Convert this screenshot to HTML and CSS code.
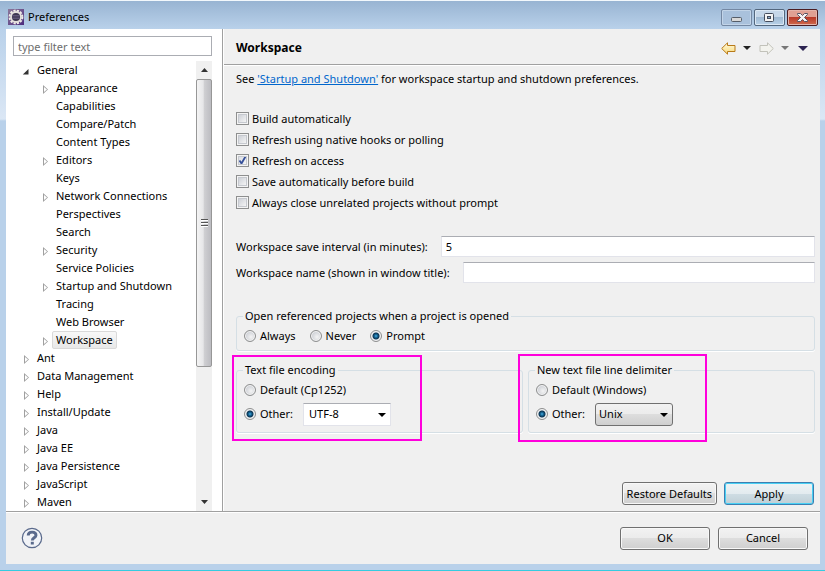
FILE: index.html
```html
<!DOCTYPE html>
<html lang="en">
<head>
<meta charset="utf-8">
<title>Preferences</title>
<link rel="stylesheet" href="styles.css">
</head>
<body>
<div class="window">
  <header class="titlebar">
    <svg class="app-icon" width="16" height="16" viewBox="0 0 16 16" aria-hidden="true">
      <defs><linearGradient id="plum" x2="1" y2="1"><stop stop-color="#8d7a9c"/><stop offset="1" stop-color="#4b2a7c"/></linearGradient></defs>
      <rect width="16" height="16" fill="url(#plum)"/>
      <circle cx="8" cy="8" r="6.400" fill="none" stroke="#f0eee8" stroke-width="2" stroke-dasharray="2.200 1.150"/>
      <circle cx="8" cy="8" r="5" fill="#3d3650" stroke="#e4e0dc" stroke-width="1.800"/>
      <path d="M4.200 6.800h7.600M4.200 9.200h7.600" stroke="#6f6689"/>
    </svg>
    <h1 class="title">Preferences</h1>
    <div class="window-controls">
      <button class="wbtn wbtn-min" type="button" aria-label="Minimize"><svg width="13" height="11" viewBox="0 0 13 11"><rect x="1.500" y="5.500" width="10" height="4" rx="1" fill="#d8d8d8" stroke="#555d68"/></svg></button>
      <button class="wbtn" type="button" aria-label="Maximize"><svg width="13" height="11" viewBox="0 0 13 11"><rect x="1.500" y="1.500" width="9" height="8" rx="1" fill="#f4f4f4" stroke="#454d5c"/><rect x="4.500" y="4.500" width="3" height="2" fill="#8ca9c8" stroke="#454d5c"/></svg></button>
      <button class="wbtn wbtn-close" type="button" aria-label="Close"><svg width="13" height="11" viewBox="0 0 13 11"><path d="M1.500 1.500h3l2 2 2-2h3v1l-3 3 3 3v1h-3l-2-2-2 2h-3v-1l3-3-3-3z" fill="#f6f4f4" stroke="#565464"/></svg></button>
    </div>
  </header>

  <div class="client">
    <div class="main">
      <nav class="sidebar" aria-label="Preference pages">
        <input class="filter" type="text" placeholder="type filter text" aria-label="type filter text">
        <div class="tree-area">
          <ul class="tree">
            <li class="node"><svg class="arrow" width="7" height="9" viewBox="0 0 7 9"><path d="M6.500 2v5.500H.8z" fill="#333"/></svg><span class="label">General</span>
              <ul class="branch">
                <li class="node parent"><span class="label">Appearance</span></li>
                <li class="node"><span class="label">Capabilities</span></li>
                <li class="node"><span class="label">Compare/Patch</span></li>
                <li class="node"><span class="label">Content Types</span></li>
                <li class="node parent"><span class="label">Editors</span></li>
                <li class="node"><span class="label">Keys</span></li>
                <li class="node parent"><span class="label">Network Connections</span></li>
                <li class="node"><span class="label">Perspectives</span></li>
                <li class="node"><span class="label">Search</span></li>
                <li class="node parent"><span class="label">Security</span></li>
                <li class="node"><span class="label">Service Policies</span></li>
                <li class="node parent"><span class="label">Startup and Shutdown</span></li>
                <li class="node"><span class="label">Tracing</span></li>
                <li class="node"><span class="label">Web Browser</span></li>
                <li class="node parent"><span class="label selected">Workspace</span></li>
              </ul>
            </li>
            <li class="node parent"><span class="label">Ant</span></li>
            <li class="node parent"><span class="label">Data Management</span></li>
            <li class="node parent"><span class="label">Help</span></li>
            <li class="node parent"><span class="label">Install/Update</span></li>
            <li class="node parent"><span class="label">Java</span></li>
            <li class="node parent"><span class="label">Java EE</span></li>
            <li class="node parent"><span class="label">Java Persistence</span></li>
            <li class="node parent"><span class="label">JavaScript</span></li>
            <li class="node parent"><span class="label">Maven</span></li>
          </ul>
          <div class="scrollbar" aria-hidden="true">
            <div class="scroll-end"><svg width="7" height="4" viewBox="0 0 7 4"><path d="M0 4L3.500 0 7 4z" fill="#333"/></svg></div>
            <div class="scroll-track">
              <div class="thumb"><svg width="7" height="8" viewBox="0 0 7 8"><path d="M0 .5h7M0 3.500h7M0 6.500h7" stroke="#555"/><path d="M0 1.500h7M0 4.500h7M0 7.500h7" stroke="#fff"/></svg></div>
            </div>
            <div class="scroll-end"><svg width="7" height="4" viewBox="0 0 7 4"><path d="M0 0L3.500 4 7 0z" fill="#333"/></svg></div>
          </div>
        </div>
      </nav>

      <main class="page">
        <div class="page-head">
          <h2 class="page-title">Workspace</h2>
          <div class="history">
            <button class="tool" type="button" aria-label="Back"><svg width="15" height="13" viewBox="0 0 15 13"><defs><linearGradient id="gold" x2="0" y2="1"><stop stop-color="#fffbe0"/><stop offset="1" stop-color="#f8d878"/></linearGradient></defs><path d="M.7 6.500L6.500 .8v2.700h7.500v6H6.500v2.700z" fill="url(#gold)" stroke="#b87a18"/></svg></button>
            <button class="tool" type="button" aria-label="Back history"><svg width="8" height="4" viewBox="0 0 8 4"><path d="M0 0h8L4 4z" fill="#222"/></svg></button>
            <button class="tool tool-next" type="button" aria-label="Forward" disabled><svg width="15" height="13" viewBox="0 0 15 13"><path d="M14.300 6.500L8.500 .8v2.700H1v6h7.500v2.700z" fill="#f3f3ee" stroke="#c2c2ba"/></svg></button>
            <button class="tool" type="button" aria-label="Forward history" disabled><svg width="8" height="4" viewBox="0 0 8 4"><path d="M0 0h8L4 4z" fill="#777"/></svg></button>
            <button class="tool tool-menu" type="button" aria-label="Menu"><svg width="10" height="5" viewBox="0 0 10 5"><path d="M0 0h10L5 5z" fill="#2b2350"/></svg></button>
          </div>
        </div>

        <form class="page-body">
          <p class="intro">See <a href="#startup">'Startup and Shutdown'</a> for workspace startup and shutdown preferences.</p>

          <div class="checks">
            <label class="option"><input type="checkbox">Build automatically</label>
            <label class="option"><input type="checkbox">Refresh using native hooks or polling</label>
            <label class="option"><input type="checkbox" checked>Refresh on access</label>
            <label class="option"><input type="checkbox">Save automatically before build</label>
            <label class="option"><input type="checkbox">Always close unrelated projects without prompt</label>
          </div>

          <div class="fields">
            <div class="field"><label for="interval">Workspace save interval (in minutes):</label><input class="text" id="interval" type="text" value="5"></div>
            <div class="field"><label for="wsname">Workspace name (shown in window title):</label><input class="text" id="wsname" type="text"></div>
          </div>

          <fieldset class="group">
            <legend>Open referenced projects when a project is opened</legend>
            <div class="row inline">
              <label class="option"><input type="radio" name="open">Always</label>
              <label class="option"><input type="radio" name="open">Never</label>
              <label class="option"><input type="radio" name="open" checked>Prompt</label>
            </div>
          </fieldset>

          <div class="groups">
            <div class="marked">
              <fieldset class="group">
                <legend>Text file encoding</legend>
                <div class="row"><label class="option"><input type="radio" name="enc">Default (Cp1252)</label></div>
                <div class="row tall">
                  <label class="option"><input type="radio" name="enc" checked>Other:</label>
                  <span class="combo"><select aria-label="Text file encoding"><option>UTF-8</option></select></span>
                </div>
              </fieldset>
              <div class="marker"></div>
            </div>
            <div class="marked">
              <fieldset class="group">
                <legend>New text file line delimiter</legend>
                <div class="row"><label class="option"><input type="radio" name="eol">Default (Windows)</label></div>
                <div class="row tall">
                  <label class="option"><input type="radio" name="eol" checked>Other:</label>
                  <span class="combo combo-button"><select aria-label="New text file line delimiter"><option>Unix</option></select></span>
                </div>
              </fieldset>
              <div class="marker"></div>
            </div>
          </div>

          <div class="actions">
            <button class="btn btn-fit" type="button">Restore Defaults</button>
            <button class="btn btn-default" type="button">Apply</button>
          </div>
        </form>
      </main>
    </div>

    <footer class="footer">
      <button class="help" type="button" aria-label="Help"><svg width="22" height="22" viewBox="0 0 22 22"><circle cx="11" cy="11" r="9.700" fill="#f1f3f7" stroke="#5a6a8c" stroke-width="1.200"/><path d="M7.200 8.600c0-2.300 1.600-3.500 3.900-3.500s3.900 1.200 3.900 3.100c0 2.500-3.700 2.600-3.700 5.200" fill="none" stroke="#5a6a8c" stroke-width="2.900"/><rect x="9.800" y="14.800" width="3" height="2.700" fill="#5a6a8c"/></svg></button>
      <div class="dialog-buttons">
        <button class="btn" type="button">OK</button>
        <button class="btn" type="button">Cancel</button>
      </div>
    </footer>
  </div>
</div>
</body>
</html>
```

FILE: styles.css
```css
* { box-sizing: border-box; }

body {
  margin: 0;
  font: 11px/16px "Noto Sans", "Open Sans", sans-serif;
  color: #000;
}

button, input, select { font: inherit; color: inherit; margin: 0; }
button { padding: 0; border: 0; background: none; }
svg { display: block; }
h1, h2, p, ul { margin: 0; padding: 0; }

.window {
  display: flex;
  flex-direction: column;
  min-height: 100vh;
  padding: 0 5px 6px 6px;
  border-top: 1px solid #f2f8fc;
  border-bottom: 1px solid #35cbe0;
  background: linear-gradient(#98b4d2, #b9d1ea 28px, #dbe7f5 118px, #b9d1ea 120px);
}

/* Title bar */
.titlebar { display: flex; align-items: center; height: 28px; padding: 4px 2px 0; }
.title { flex: 1; margin-left: 4px; font-size: 11px; font-weight: 400; }
.window-controls { display: flex; gap: 2px; }
.wbtn {
  display: grid;
  place-items: center;
  width: 31px;
  height: 17px;
  border: 1px solid #53677e;
  border-radius: 2px;
  background: linear-gradient(#c6d7e9 48%, #9fb9d3 50%, #b9d2e8);
  box-shadow: inset 0 0 0 1px #dce8f4;
}
.wbtn-min { border-color: #7488a3; background: #a9c1dc; box-shadow: inset 0 0 0 1px #c2d4e8; }
.wbtn-close {
  border-color: #4b1d22;
  background: linear-gradient(#e0a093 48%, #b93a29 50%, #cf6b4e);
  box-shadow: inset 0 0 0 1px #e5b4aa;
}

.client { flex: 1; display: flex; flex-direction: column; background: #f0f0f0; }
.main { flex: 1; display: flex; }

/* Sidebar */
.sidebar {
  flex: none;
  display: flex;
  flex-direction: column;
  width: 217px;
  padding: 7px 10px 0 7px;
  border-right: 1px solid #a0a0a0;
  background: #fff;
}
.filter { width: 100%; height: 20px; padding: 0 4px; border: 1px solid #abadb3; background: #fff; }
.filter::placeholder { color: #6d6d6d; opacity: 1; }
.tree-area { flex: 1; display: flex; justify-content: space-between; margin-top: 5px; }
.tree, .branch { list-style: none; }
.tree { padding-left: 20px; }
.branch { padding-left: 19px; }
.node { position: relative; line-height: 18px; white-space: nowrap; }
.label { display: inline-block; height: 18px; padding: 0 4px; vertical-align: top; }
.selected {
  line-height: 16px;
  border: 1px solid #d9d9d9;
  border-radius: 2px;
  padding: 0 3px;
  background: linear-gradient(#f8f8f8, #e8e8e8);
}
.arrow { position: absolute; left: -11px; top: 6px; }
.parent::before {
  content: "";
  position: absolute;
  left: -9px;
  top: 6px;
  width: 5px;
  height: 9px;
  background: #a0a0a0;
  clip-path: polygon(0 0, 100% 50%, 0 100%);
}
.parent::after {
  content: "";
  position: absolute;
  left: -8px;
  top: 8px;
  width: 3px;
  height: 5px;
  background: #fff;
  clip-path: polygon(0 0, 100% 50%, 0 100%);
}

.scrollbar { display: flex; flex-direction: column; width: 16px; background: #f0f0f0; }
.scroll-end { display: grid; place-items: center; height: 18px; }
.scroll-track { flex: 1; }
.thumb {
  display: grid;
  place-items: center;
  height: 69.5%;
  border: 1px solid #979797;
  border-radius: 2px;
  background: linear-gradient(90deg, #f4f4f4, #e6e6e8 45%, #d0d0d3 50%, #bcbcc1);
}

/* Preference page */
.page { flex: 1; display: flex; flex-direction: column; border-left: 1px solid #fff; }
.page-head {
  display: flex;
  align-items: center;
  justify-content: space-between;
  height: 36px;
  padding: 3px 12px 0;
  border-bottom: 1px solid #a0a0a0;
}
.page-title { font-size: 12px; font-weight: 700; }
.history { display: flex; align-items: center; gap: 7px; }
.tool-next { margin-left: 1px; }
.tool-menu { margin-left: 2px; }
.page-body {
  flex: 1;
  display: flex;
  flex-direction: column;
  padding: 5px 5px 6px 12px;
  border-top: 1px solid #fff;
}
.intro a { color: #0066cc; }
.checks { margin-top: 21px; }
.checks .option { height: 21px; }
.option { display: flex; align-items: center; gap: 3px; white-space: nowrap; }

input[type="checkbox"], input[type="radio"] {
  flex: none;
  appearance: none;
  width: 13px;
  height: 13px;
  border: 1px solid #8e8f8f;
}
input[type="checkbox"] {
  background: linear-gradient(135deg, #c3c7cf, #f6f6f6 85%);
  box-shadow: inset 0 0 0 1px #f4f4f4, inset 0 0 0 2px #c6c9cf;
}
input[type="checkbox"]:checked {
  background: url("data:image/svg+xml,%3Csvg xmlns='http://www.w3.org/2000/svg' viewBox='0 0 11 11'%3E%3Cpath d='M2.500 5.500L4.500 8.500 8.500 1.500' fill='none' stroke='%2336509a' stroke-width='1.800'/%3E%3C/svg%3E"), linear-gradient(135deg, #d3d7df, #f6f6f6 85%);
}
input[type="radio"] {
  width: 12px;
  height: 12px;
  border-radius: 50%;
  background: radial-gradient(circle at 60% 60%, #f4f4f4, #c9ccd2 75%);
  box-shadow: inset 0 0 0 1px #f4f4f4;
}
input[type="radio"]:checked {
  background: radial-gradient(circle, #6cc4ea 0, #1b78ad 1px, #0b3452 3px, #e3e6ea 4px);
}

.fields { display: flex; flex-direction: column; gap: 5px; margin-top: 23px; }
.field { display: flex; align-items: center; gap: 13px; }
.text {
  flex: 1;
  min-width: 0;
  height: 21px;
  padding: 0 4px;
  border: 1px solid #e2e3ea;
  border-top-color: #abadb3;
  background: #fff;
}

.group {
  min-width: 0;
  margin: 0;
  padding: 0 7px 6px;
  border: 1px solid #d5dfe5;
  border-radius: 3px;
  box-shadow: 0 1px 0 #fff;
}
.fields + .group { margin-top: 25px; }
legend { padding: 0 2px; margin-left: -1px; line-height: 16px; }
.group .option { gap: 4px; }
.row { display: flex; align-items: center; gap: 10px; height: 16px; margin-top: 4px; }
.inline { gap: 14px; }
.tall { height: 24px; }

.groups { display: grid; grid-template-columns: 1fr 1fr; gap: 5px; margin-top: 11px; }
.marked { position: relative; }
.marker {
  position: absolute;
  left: -4px;
  top: -7px;
  width: 190px;
  height: 86px;
  border: 2px solid #ff00dc;
  pointer-events: none;
}
.marked + .marked .marker { left: -10px; top: -8px; width: 189px; height: 88px; }

.combo { position: relative; display: flex; height: 23px; }
.combo::after {
  content: "";
  position: absolute;
  right: 5px;
  top: 10px;
  border: 4px solid transparent;
  border-top-color: #000;
  border-bottom: 0;
  pointer-events: none;
}
.combo select {
  appearance: none;
  width: 88px;
  padding: 0 5px;
  border: 1px solid #e2e3ea;
  border-top-color: #abadb3;
  border-radius: 0;
  background: #fff;
}
.combo-button select {
  width: 78px;
  padding: 0 3px;
  border: 1px solid #707070;
  border-radius: 3px;
  background: linear-gradient(#f2f2f2, #ebebeb 50%, #dddddd 50%, #cfcfcf);
}

.actions { display: flex; justify-content: flex-end; gap: 7px; margin-top: auto; padding-right: 1px; }
.btn {
  min-width: 90px;
  height: 23px;
  border: 1px solid #707070;
  border-radius: 3px;
  background: linear-gradient(#f2f2f2, #ebebeb 50%, #dddddd 50%, #cfcfcf);
  box-shadow: inset 0 0 0 1px #f8f8f8;
}
.btn-fit { padding: 0 4px; }
.btn-default {
  border-color: #3c7fb1;
  background: linear-gradient(#eef3f5, #e3ebef 50%, #cfdde4 50%, #c0cfd6);
  box-shadow: inset 0 0 0 1px #48d0f4;
}

/* Footer */
.footer {
  display: flex;
  align-items: center;
  justify-content: space-between;
  height: 53px;
  padding: 0 12px 0 15px;
  border-top: 1px solid #a0a0a0;
  box-shadow: inset 0 1px 0 #fff;
}
.dialog-buttons { display: flex; gap: 8px; }
```
